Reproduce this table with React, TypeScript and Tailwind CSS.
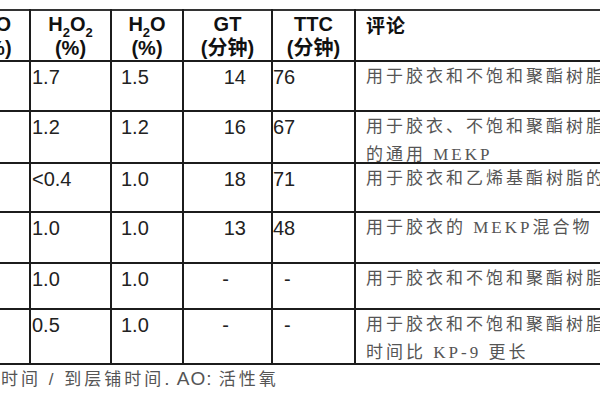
const sans = "font-['Liberation_Sans','Noto_Sans_CJK_SC',sans-serif]";
const serif = "font-['Liberation_Serif','Noto_Sans_CJK_SC',serif]";

type Row = {
  h: string;
  h2o2: string;
  h2o: string;
  gt: string;
  ttc: string;
  note: string[];
};

const rows: Row[] = [
  { h: "h-[50px]", h2o2: "1.7", h2o: "1.5", gt: "14", ttc: "76", note: ["用于胶衣和不饱和聚酯树脂的标准"] },
  { h: "h-[52px]", h2o2: "1.2", h2o: "1.2", gt: "16", ttc: "67", note: ["用于胶衣、不饱和聚酯树脂", "的通用 MEKP"] },
  { h: "h-[49px]", h2o2: "<0.4", h2o: "1.0", gt: "18", ttc: "71", note: ["用于胶衣和乙烯基酯树脂的"] },
  { h: "h-[51px]", h2o2: "1.0", h2o: "1.0", gt: "13", ttc: "48", note: ["用于胶衣的 MEKP混合物"] },
  { h: "h-[46px]", h2o2: "1.0", h2o: "1.0", gt: "-", ttc: "-", note: ["用于胶衣和不饱和聚酯树脂"] },
  { h: "h-[55px]", h2o2: "0.5", h2o: "1.0", gt: "-", ttc: "-", note: ["用于胶衣和不饱和聚酯树脂", "时间比 KP-9 更长"] },
];

const cell = "border-2 border-[#1c1c1c] align-top p-0";
const sub = "text-[13px] leading-none align-[-3px]";

export default function App() {
  return (
    <div className="w-[600px] h-[400px] overflow-hidden bg-white">
      <div className="pt-[9px]">
        <table className="table-fixed border-collapse ml-[-39px] w-[768px]">
          <colgroup>
            <col className="w-[68px]" />
            <col className="w-[81px]" />
            <col className="w-[72px]" />
            <col className="w-[89px]" />
            <col className="w-[83px]" />
            <col className="w-[375px]" />
          </colgroup>
          <thead>
            <tr className={`h-[50px] ${sans} text-[20px] font-bold text-[#111] leading-[24px]`}>
              <th className={`${cell} text-center pt-[1px] border-t-[#333]`}>
                <div>AO</div>
                <div>(%)</div>
              </th>
              <th className={`${cell} text-center pt-[1px] border-t-[#333]`}>
                <div>
                  H<sub className={sub}>2</sub>O<sub className={sub}>2</sub>
                </div>
                <div>(%)</div>
              </th>
              <th className={`${cell} text-center pt-[1px] border-t-[#333]`}>
                <div>
                  H<sub className={sub}>2</sub>O
                </div>
                <div>(%)</div>
              </th>
              <th className={`${cell} text-center pt-[1px] border-t-[#333]`}>
                <div>GT</div>
                <div>(分钟)</div>
              </th>
              <th className={`${cell} text-center pt-[1px] border-t-[#333]`}>
                <div>TTC</div>
                <div>(分钟)</div>
              </th>
              <th className={`${cell} text-left pl-[10px] pt-[2px] border-t-[#333] font-['Noto_Sans_CJK_SC',sans-serif] text-[19px] tracking-[1px]`}>
                评论
              </th>
            </tr>
          </thead>
          <tbody>
            {rows.map((r, i) => (
              <tr key={i} className={`${r.h} text-[20px] leading-[24px] text-[#222]`}>
                <td className={cell}></td>
                <td className={`${cell} ${sans} pl-[1px] pt-[3px]`}>{r.h2o2}</td>
                <td className={`${cell} ${sans} pl-[9px] pt-[3px]`}>{r.h2o}</td>
                <td className={`${cell} ${sans} pt-[3px] ${r.gt === "-" ? "text-center pr-[4px]" : "text-right pr-[25px]"}`}>
                  {r.gt}
                </td>
                <td className={`${cell} ${sans} pt-[3px] ${r.ttc === "-" ? "pl-[11px]" : "pl-0"}`}>
                  {r.ttc}
                </td>
                <td className={`${cell} ${serif} pl-[10px] pt-[1px] text-[17px] leading-[28px] tracking-[3px] text-[#555] whitespace-nowrap overflow-hidden`}>
                  <div className="-mb-[12px]">
                    {r.note.map((line, j) => (
                      <div key={j}>{line}</div>
                    ))}
                  </div>
                </td>
              </tr>
            ))}
          </tbody>
        </table>
      </div>
      <div className={`pt-[2px] pl-[1px] ${sans} text-[17px] leading-[24px] tracking-[3px] text-[#555] whitespace-nowrap`}>
        时间<span className="tracking-[3px]"> / </span>到层铺时间<span className="text-[19px] tracking-[1px]">. AO: </span>活性氧
      </div>
    </div>
  );
}
